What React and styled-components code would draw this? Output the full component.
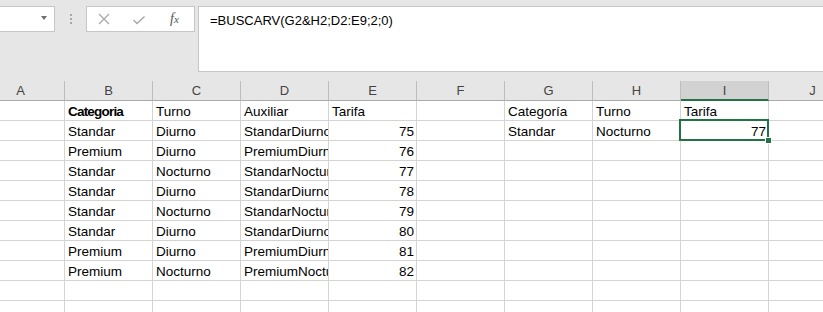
import React from 'react';
import styled, { createGlobalStyle } from 'styled-components';

const GlobalStyle = createGlobalStyle`
  * { box-sizing: border-box; }
  body {
    margin: 0;
    background: #fff;
    overflow: hidden;
    font-family: "Liberation Sans", Arial, sans-serif;
  }
`;

const columns = ['A', 'B', 'C', 'D', 'E', 'F', 'G', 'H', 'I', 'J'];

// each row: values for A..J, numbers are right aligned
const rows = [
  ['', 'Categoria', 'Turno', 'Auxiliar', 'Tarifa', '', 'Categoría', 'Turno', 'Tarifa', ''],
  ['', 'Standar', 'Diurno', 'StandarDiurno', 75, '', 'Standar', 'Nocturno', 77, ''],
  ['', 'Premium', 'Diurno', 'PremiumDiurno', 76, '', '', '', '', ''],
  ['', 'Standar', 'Nocturno', 'StandarNocturno', 77, '', '', '', '', ''],
  ['', 'Standar', 'Diurno', 'StandarDiurno', 78, '', '', '', '', ''],
  ['', 'Standar', 'Nocturno', 'StandarNocturno', 79, '', '', '', '', ''],
  ['', 'Standar', 'Diurno', 'StandarDiurno', 80, '', '', '', '', ''],
  ['', 'Premium', 'Diurno', 'PremiumDiurno', 81, '', '', '', '', ''],
  ['', 'Premium', 'Nocturno', 'PremiumNocturno', 82, '', '', '', '', ''],
  ['', '', '', '', '', '', '', '', '', ''],
  ['', '', '', '', '', '', '', '', '', ''],
];

function App() {
  return (
    <Page>
      <GlobalStyle />
      <Toolbar>
        <NameBox>
          <Arrow />
        </NameBox>
        <Grip>
          <Dot />
          <Dot />
          <Dot />
        </Grip>
        <FuncBox>
          <IconButton>
            <svg width="14" height="14" viewBox="0 0 14 14">
              <path d="M2 2 L12 12 M12 2 L2 12" stroke="#a6a6a6" strokeWidth="1.2" fill="none" />
            </svg>
          </IconButton>
          <IconButton>
            <svg width="14" height="14" viewBox="0 0 14 14">
              <path d="M1.5 8 L5 11.5 L12.5 4.5" stroke="#a6a6a6" strokeWidth="1.3" fill="none" />
            </svg>
          </IconButton>
          <Fx>
            f<small>x</small>
          </Fx>
        </FuncBox>
        <FormulaBar>=BUSCARV(G2&amp;H2;D2:E9;2;0)</FormulaBar>
      </Toolbar>

      <Sheet>
        {columns.map((c) => (
          <ColHeader key={c} selected={c === 'I'}>
            {c}
          </ColHeader>
        ))}
        {rows.map((row, r) =>
          row.map((value, c) => (
            <Cell
              key={r + '-' + c}
              numeric={typeof value === 'number'}
              bold={r === 0 && c === 1}
              active={r === 1 && c === 8}
            >
              {value}
              {r === 1 && c === 8 && <Handle />}
            </Cell>
          ))
        )}
      </Sheet>
    </Page>
  );
}

const Page = styled.div`
  width: 823px;
  height: 312px;
  overflow: hidden;
`;

const Toolbar = styled.div`
  display: flex;
  align-items: flex-start;
  height: 81px;
  padding-top: 6px;
  background: #e6e6e6;
`;

const NameBox = styled.div`
  width: 56px;
  height: 26px;
  margin-left: -1px;
  background: #fff;
  border: 1px solid #c6c6c6;
  display: flex;
  align-items: center;
  justify-content: flex-end;
  padding-right: 7px;
  padding-bottom: 2px;
`;

const Arrow = styled.div`
  width: 0;
  height: 0;
  border-left: 3.5px solid transparent;
  border-right: 3.5px solid transparent;
  border-top: 4px solid #6f6f6f;
`;

const Grip = styled.div`
  width: 31px;
  display: flex;
  flex-direction: column;
  align-items: center;
  gap: 2px;
  padding-top: 8px;
`;

const Dot = styled.div`
  width: 2px;
  height: 2px;
  background: #a6a6a6;
`;

const FuncBox = styled.div`
  width: 109px;
  height: 26px;
  background: #fff;
  border: 1px solid #c6c6c6;
  display: flex;
  align-items: center;
  padding-left: 10px;
  gap: 21px;
`;

const IconButton = styled.div`
  width: 14px;
  height: 14px;
  display: flex;
  align-items: center;
  justify-content: center;
`;

const Fx = styled.div`
  font-family: "Liberation Serif", "Times New Roman", serif;
  font-style: italic;
  font-size: 14px;
  color: #555;
  margin-left: 3px;
  small {
    font-size: 11px;
  }
`;

const FormulaBar = styled.div`
  flex: 1;
  margin-left: 3px;
  margin-right: -1px;
  height: 66px;
  background: #fff;
  border: 1px solid #c6c6c6;
  padding: 5px 11px;
  font-size: 13px;
  line-height: 17px;
  color: #000;
`;

const Sheet = styled.div`
  display: grid;
  grid-template-columns: repeat(10, 88px);
  grid-auto-rows: 20px;
  margin-left: -23px;
`;

const ColHeader = styled.div`
  background: ${(p) => (p.selected ? '#d2d2d2' : '#e6e6e6')};
  border-right: 1px solid #bdbdbd;
  border-bottom: ${(p) => (p.selected ? '2px solid #217346' : '1px solid #ababab')};
  font-size: 13px;
  line-height: 20px;
  text-align: center;
  color: #444;
`;

const Cell = styled.div`
  position: relative;
  border-right: 1px solid #d4d4d4;
  border-bottom: 1px solid #d4d4d4;
  padding: 2px ${(p) => (p.numeric ? '2px' : '3px')} 0 3px;
  font-size: 13.5px;
  line-height: 18px;
  font-weight: ${(p) => (p.bold ? 'bold' : 'normal')};
  letter-spacing: ${(p) => (p.bold ? '-0.8px' : 'normal')};
  text-align: ${(p) => (p.numeric ? 'right' : 'left')};
  white-space: nowrap;
  overflow: ${(p) => (p.active ? 'visible' : 'hidden')};
  color: #000;

  ${(p) =>
    p.active &&
    `
    &::after {
      content: '';
      position: absolute;
      top: -2px;
      left: -2px;
      right: -1px;
      bottom: -1px;
      border: 2px solid #217346;
      pointer-events: none;
    }
  `}
`;

const Handle = styled.div`
  position: absolute;
  right: -4px;
  bottom: -4px;
  width: 7px;
  height: 7px;
  background: #217346;
  border: 1px solid #fff;
  z-index: 1;
`;

export default App;
